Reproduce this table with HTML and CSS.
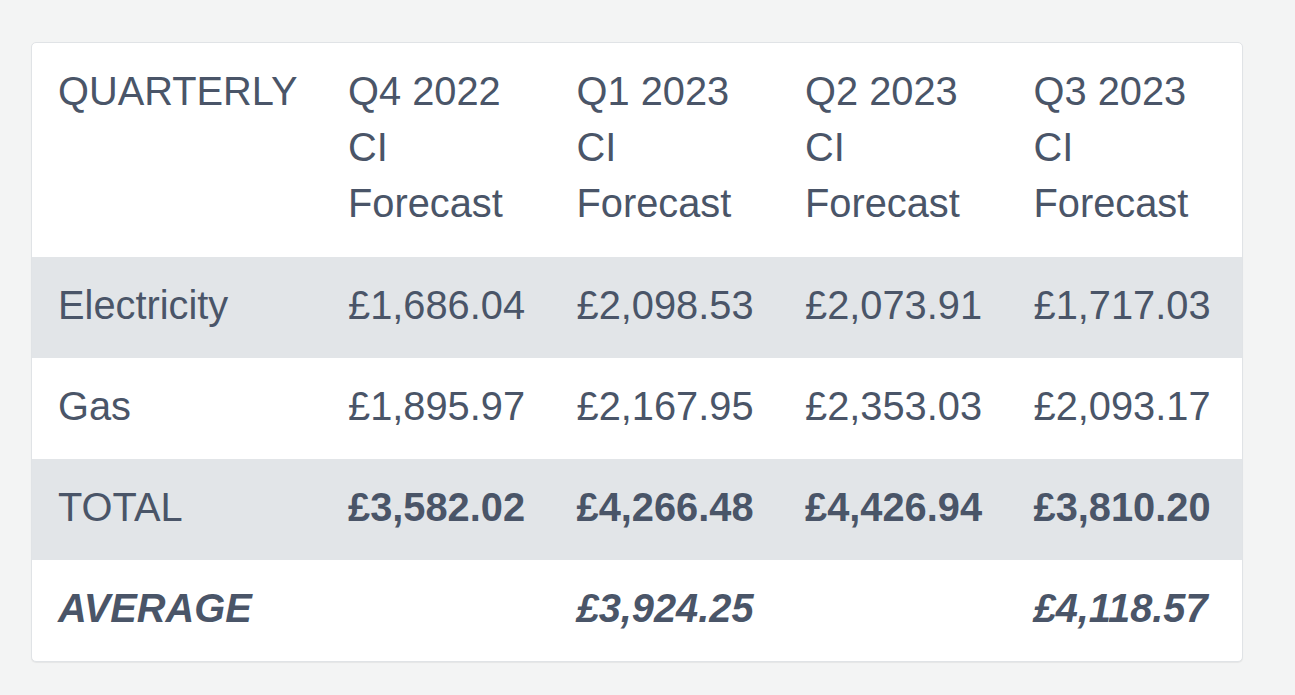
FILE: index.html
```html
<!DOCTYPE html>
<html lang="en">
<head>
<meta charset="utf-8">
<title>Quarterly CI Forecast</title>
<link rel="stylesheet" href="styles.css">
</head>
<body>
<div class="page">
  <div class="card">
    <table class="forecast">
      <colgroup>
        <col class="c-label">
        <col class="c-q">
        <col class="c-q">
        <col class="c-q">
        <col class="c-last">
      </colgroup>
      <thead>
        <tr>
          <th>QUARTERLY</th>
          <th>Q4 2022<br>CI<br>Forecast</th>
          <th>Q1 2023<br>CI<br>Forecast</th>
          <th>Q2 2023<br>CI<br>Forecast</th>
          <th>Q3 2023<br>CI<br>Forecast</th>
        </tr>
      </thead>
      <tbody>
        <tr class="stripe">
          <td>Electricity</td>
          <td>£1,686.04</td>
          <td>£2,098.53</td>
          <td>£2,073.91</td>
          <td>£1,717.03</td>
        </tr>
        <tr>
          <td>Gas</td>
          <td>£1,895.97</td>
          <td>£2,167.95</td>
          <td>£2,353.03</td>
          <td>£2,093.17</td>
        </tr>
        <tr class="stripe total">
          <td>TOTAL</td>
          <td class="strong">£3,582.02</td>
          <td class="strong">£4,266.48</td>
          <td class="strong">£4,426.94</td>
          <td class="strong">£3,810.20</td>
        </tr>
        <tr class="average">
          <td class="strong em">AVERAGE</td>
          <td></td>
          <td class="strong em">£3,924.25</td>
          <td></td>
          <td class="strong em">£4,118.57</td>
        </tr>
      </tbody>
    </table>
  </div>
</div>
</body>
</html>
```

FILE: styles.css
```css
html, body {
  margin: 0;
  padding: 0;
  background: #f3f4f4;
}

body {
  font-family: "Liberation Sans", Arial, sans-serif;
  color: #4a5568;
}

.page {
  padding: 42px 52px 34px 31px;
}

.card {
  width: 1210px;
  background: #ffffff;
  border: 1px solid #e0e3e6;
  border-radius: 5px;
  box-shadow: 0 1px 1px rgba(0, 0, 0, 0.06);
  overflow: hidden;
}

.forecast {
  width: 100%;
  border-collapse: collapse;
  table-layout: fixed;
  font-size: 39.8px;
  line-height: 56px;
}

.c-label { width: 290px; }
.c-q { width: 228.5px; }
.c-last { width: auto; }

.forecast th,
.forecast td {
  text-align: left;
  vertical-align: top;
  padding: 20px 20px 25px 26px;
  white-space: nowrap;
}

.forecast th {
  font-weight: normal;
  padding-top: 20px;
  padding-bottom: 26px;
}

.forecast tr.stripe td {
  background: #e2e5e8;
}

.strong {
  font-weight: bold;
}

.em {
  font-style: italic;
}
```
